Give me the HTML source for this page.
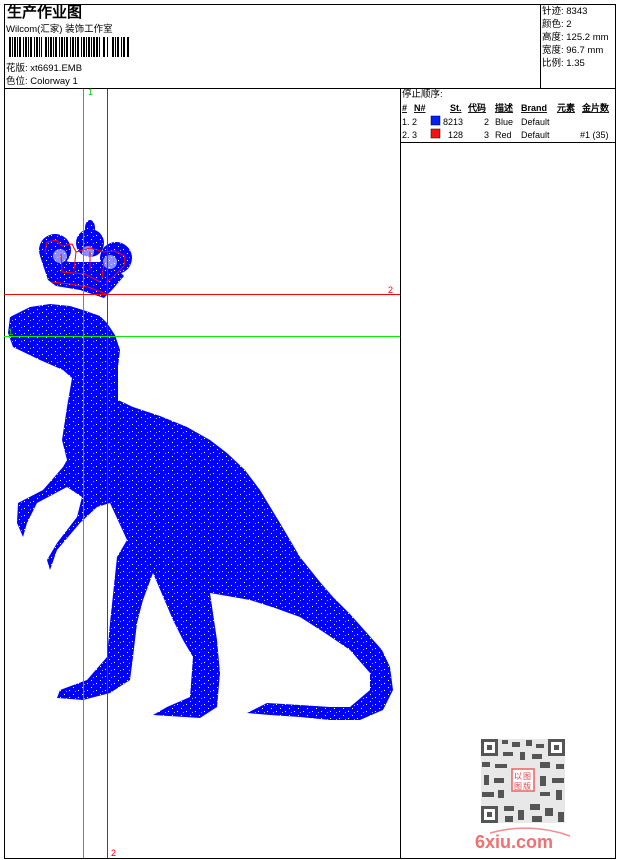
<!DOCTYPE html>
<html><head><meta charset="utf-8"><style>
html,body{margin:0;padding:0;background:#fff;width:620px;height:860px;overflow:hidden}
svg text{font-family:"Liberation Sans","WenQuanYi Zen Hei",sans-serif}
</style></head><body>
<svg width="620" height="860" viewBox="0 0 620 860" xmlns="http://www.w3.org/2000/svg">
<defs>
<pattern id="sp" width="9" height="7" patternUnits="userSpaceOnUse">
<rect width="9" height="7" fill="#0000ff"/>
<rect x="1" y="1" width="1" height="1" fill="#fff"/><rect x="6" y="4" width="1" height="1" fill="#fff"/><rect x="3" y="5" width="1" height="1" fill="#aab"/>
</pattern>
</defs>
<rect x="0" y="0" width="620" height="860" fill="#fff"/>
<rect x="4.5" y="4.5" width="611" height="854" fill="none" stroke="#000" stroke-width="1"/>
<line x1="4" y1="88.5" x2="616" y2="88.5" stroke="#000"/>
<line x1="540.5" y1="4" x2="540.5" y2="88" stroke="#000"/>
<line x1="400.5" y1="88" x2="400.5" y2="858" stroke="#000"/>
<line x1="400" y1="142.5" x2="616" y2="142.5" stroke="#000"/>
<text x="7" y="17" font-size="15" font-weight="bold" fill="#000">生产作业图</text>
<text x="6" y="32" font-size="9.5" fill="#000">Wilcom(汇家) 装饰工作室</text>
<g fill="#000">
<rect x="9" y="37" width="2" height="20"/><rect x="12" y="37" width="1" height="20"/><rect x="14" y="37" width="2" height="20"/><rect x="17" y="37" width="1" height="20"/><rect x="19" y="37" width="2" height="20"/><rect x="23" y="37" width="1" height="20"/><rect x="25" y="37" width="2" height="20"/><rect x="28" y="37" width="1" height="20"/><rect x="30" y="37" width="2" height="20"/><rect x="34" y="37" width="1" height="20"/><rect x="36" y="37" width="2" height="20"/><rect x="39" y="37" width="1" height="20"/><rect x="41" y="37" width="1" height="20"/><rect x="45" y="37" width="2" height="20"/><rect x="48" y="37" width="1" height="20"/><rect x="50" y="37" width="2" height="20"/><rect x="53" y="37" width="1" height="20"/><rect x="55" y="37" width="2" height="20"/><rect x="59" y="37" width="1" height="20"/><rect x="61" y="37" width="2" height="20"/><rect x="64" y="37" width="1" height="20"/><rect x="66" y="37" width="2" height="20"/><rect x="70" y="37" width="1" height="20"/><rect x="72" y="37" width="2" height="20"/><rect x="75" y="37" width="1" height="20"/><rect x="77" y="37" width="2" height="20"/><rect x="81" y="37" width="1" height="20"/><rect x="83" y="37" width="2" height="20"/><rect x="86" y="37" width="1" height="20"/><rect x="88" y="37" width="2" height="20"/><rect x="91" y="37" width="1" height="20"/><rect x="93" y="37" width="2" height="20"/><rect x="96" y="37" width="2" height="20"/><rect x="99" y="37" width="1" height="20"/><rect x="103" y="37" width="2" height="20"/><rect x="107" y="37" width="1" height="20"/><rect x="112" y="37" width="2" height="20"/><rect x="115" y="37" width="1" height="20"/><rect x="117" y="37" width="2" height="20"/><rect x="121" y="37" width="1" height="20"/><rect x="123" y="37" width="2" height="20"/><rect x="127" y="37" width="2" height="20"/>
</g>
<text x="6" y="71" font-size="9.5" fill="#000">花版: xt6691.EMB</text>
<text x="6" y="84" font-size="9.5" fill="#000">色位: Colorway 1</text>
<g font-size="9.5" fill="#000">
<text x="542" y="14">针迹: 8343</text>
<text x="542" y="27">颜色: 2</text>
<text x="542" y="40">高度: 125.2 mm</text>
<text x="542" y="53">宽度: 96.7 mm</text>
<text x="542" y="66">比例: 1.35</text>
<text x="402" y="97">停止顺序:</text>
</g>
<g font-size="9" font-weight="bold" fill="#000" text-decoration="underline">
<text x="402" y="111">#</text><text x="414" y="111">N#</text><text x="450" y="111">St.</text><text x="468" y="111">代码</text><text x="495" y="111">描述</text><text x="521" y="111">Brand</text><text x="557" y="111">元素</text><text x="582" y="111">金片数</text>
</g>
<g font-size="9" fill="#000">
<text x="402" y="125">1. 2</text><rect x="431" y="116" width="9" height="9" fill="#0020ff" stroke="#000" stroke-width="0.5"/><text x="443" y="125">8213</text><text x="484" y="125">2</text><text x="495" y="125">Blue</text><text x="521" y="125">Default</text>
<text x="402" y="138">2. 3</text><rect x="431" y="129" width="9" height="9" fill="#ff1010" stroke="#000" stroke-width="0.5"/><text x="448" y="138">128</text><text x="484" y="138">3</text><text x="495" y="138">Red</text><text x="521" y="138">Default</text><text x="580" y="138">#1 (35)</text>
</g>
<path fill="url(#sp)" d="M10,317 L30,307 50,304 70,306 83,310 100,316 107,323 115,335 120,350 118,367 118,400 133,407 160,416 187,427 210,440 227,453 245,470 260,490 280,523 300,557 320,582 333,597 350,614 367,633 382,650 390,667 393,690 383,710 360,720 330,720 300,717 270,715 247,713 267,703 300,705 330,707 350,707 370,690 370,673 350,650 325,633 300,617 275,608 250,600 210,593 217,640 220,673 217,707 200,718 153,715 167,707 190,697 193,657 183,640 173,620 153,573 143,600 137,623 133,657 130,680 110,693 83,700 57,698 60,690 87,680 107,657 110,623 117,557 127,540 110,503 97,507 80,523 57,550 50,570 47,560 57,543 77,517 82,497 67,487 37,503 27,523 23,537 17,523 18,503 43,490 63,467 67,460 62,440 67,407 72,378 63,370 40,360 13,347 8,333 Z"/>
<!-- crown -->
<g fill="url(#sp)">
<circle cx="55" cy="250" r="16"/>
<circle cx="90" cy="243" r="14"/>
<circle cx="116" cy="258" r="16"/>
<ellipse cx="90" cy="228" rx="5" ry="8"/>
<path d="M40,256 L48,280 56,286 80,290 104,298 112,290 124,276 110,262 70,262 Z"/>
</g>
<g fill="#fff" opacity="0.55">
<circle cx="60" cy="256" r="7"/><circle cx="88" cy="252" r="6"/><circle cx="110" cy="262" r="7"/>
</g>
<path fill="none" stroke="#ff0000" stroke-width="1" d="M45,252 L47,242 56,240 62,246 72,244 76,252 90,248 104,252 114,251 125,256 124,266 112,278 106,282 M61,254 L62,272 85,274 100,282 M52,282 L70,284 88,287 106,294 M76,252 L74,270 M90,252 L90,270 M104,262 L102,278"/>
<line x1="83.5" y1="89" x2="83.5" y2="858" stroke="#00dd00" stroke-width="1"/>
<line x1="107.5" y1="89" x2="107.5" y2="858" stroke="#ee0000" stroke-width="1"/>
<line x1="4" y1="294.5" x2="400" y2="294.5" stroke="#ff0000" stroke-width="1"/>
<line x1="4" y1="336.5" x2="400" y2="336.5" stroke="#00ee00" stroke-width="1"/>
<g font-family="Liberation Mono,monospace" font-size="9">
<text x="88" y="95" fill="#00cc00">1</text>
<text x="388" y="293" fill="#ff0000">2</text>
<text x="8" y="335" fill="#00cc00">1</text>
<text x="111" y="856" fill="#ff0000">2</text>
</g>
<g fill="#555">
<rect x="481" y="739" width="84" height="84" fill="#666" opacity="0.15"/>
<rect x="481" y="739" width="17" height="17"/><rect x="484" y="742" width="11" height="11" fill="#fff"/><rect x="487" y="745" width="5" height="5"/>
<rect x="548" y="739" width="17" height="17"/><rect x="551" y="742" width="11" height="11" fill="#fff"/><rect x="554" y="745" width="5" height="5"/>
<rect x="481" y="806" width="17" height="17"/><rect x="484" y="809" width="11" height="11" fill="#fff"/><rect x="487" y="812" width="5" height="5"/>
<rect x="502" y="740" width="6" height="4"/><rect x="512" y="742" width="8" height="5"/><rect x="526" y="740" width="6" height="6"/><rect x="536" y="744" width="8" height="4"/>
<rect x="503" y="752" width="10" height="4"/><rect x="520" y="752" width="5" height="8"/><rect x="532" y="754" width="10" height="5"/>
<rect x="482" y="762" width="8" height="5"/><rect x="495" y="764" width="12" height="4"/><rect x="540" y="762" width="10" height="6"/><rect x="556" y="764" width="8" height="5"/>
<rect x="484" y="775" width="5" height="10"/><rect x="494" y="778" width="10" height="5"/><rect x="540" y="776" width="6" height="10"/><rect x="552" y="778" width="12" height="5"/>
<rect x="482" y="792" width="12" height="5"/><rect x="498" y="790" width="6" height="8"/><rect x="540" y="792" width="10" height="4"/><rect x="556" y="790" width="6" height="10"/>
<rect x="504" y="806" width="10" height="5"/><rect x="518" y="810" width="6" height="10"/><rect x="530" y="804" width="10" height="6"/><rect x="545" y="808" width="8" height="8"/><rect x="558" y="812" width="6" height="10"/><rect x="505" y="816" width="8" height="6"/><rect x="532" y="816" width="10" height="6"/>
</g>
<rect x="512" y="769" width="22" height="22" fill="#fff" stroke="#f06060" stroke-width="1.5"/>
<text x="514" y="779" font-size="8" fill="#e04040">以</text><text x="523" y="779" font-size="8" fill="#e04040">图</text>
<text x="514" y="789" font-size="8" fill="#e04040">图</text><text x="523" y="789" font-size="8" fill="#e04040">版</text>
<path d="M490,833 Q530,822 570,836" fill="none" stroke="#f09090" stroke-width="1.5"/>
<text x="475" y="848" font-size="18" font-weight="bold" fill="#f07070">6xiu.com</text>
</svg>
</body></html>
